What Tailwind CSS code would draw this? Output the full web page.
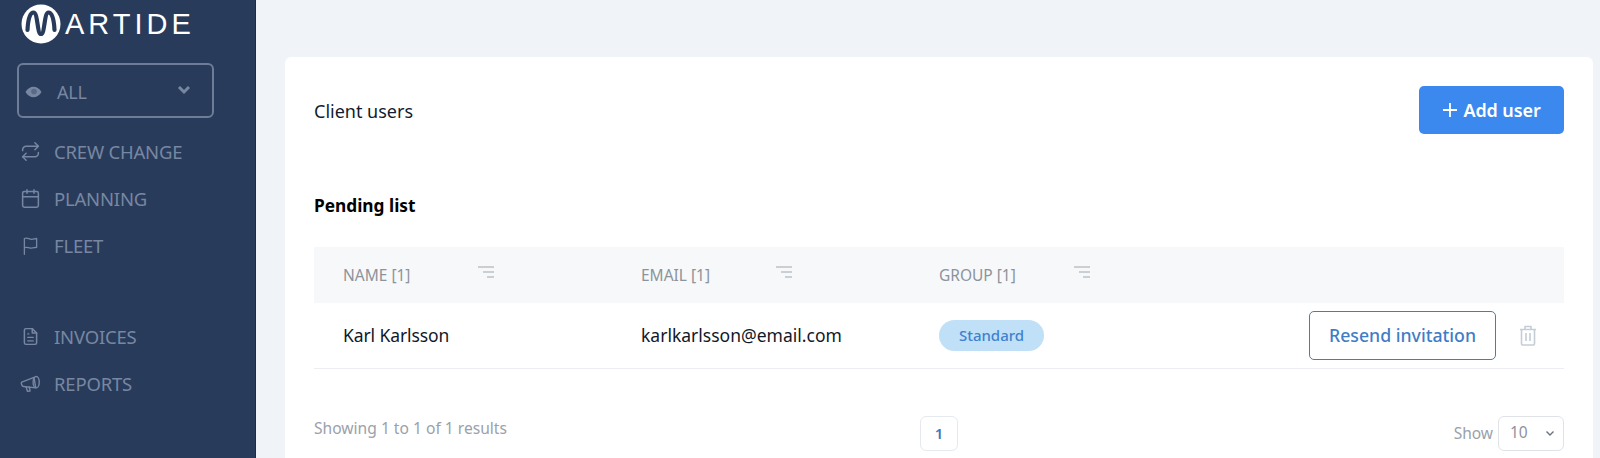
<!DOCTYPE html>
<html><head><meta charset="utf-8"><script src="https://cdn.jsdelivr.net/npm/@tailwindcss/browser@4"></script></head>
<body class="overflow-hidden">
<div class="flex h-[458px] w-[1600px] overflow-hidden bg-[#f0f3f8] font-['Noto_Sans','Open_Sans',sans-serif]">
  <aside class="w-[256px] shrink-0 bg-[#283b5b] text-[#7887a1] border-r border-[#1d2d49] flex flex-col">
    <div class="h-[63px] pl-[21px] pt-[4px] flex items-start">
      <svg width="40" height="40" viewBox="0 0 40 40" class="shrink-0"><circle cx="20" cy="20" r="19.500" fill="#fff"/><path d="M6.500 26 C7 15 9 8.500 12.500 8.500 C17 8.500 16 30 20 30 C24 30 23 8.500 27.500 8.500 C31 8.500 33 15 33.500 26" fill="none" stroke="#283b5b" stroke-width="4.200" stroke-linecap="round"/></svg>
      <span class="text-white text-[29px] leading-[32px] mt-[4px] ml-[4px] tracking-[4px] font-['Liberation_Sans',sans-serif]">ARTIDE</span>
    </div>
    <div class="mx-[17px] h-[55px] w-[197px] border-2 border-[#6d7d98] rounded-[6px] flex items-center pl-[6px] pr-[21px] shrink-0">
      <svg class="mt-[2px]" width="17" height="12" viewBox="0 0 18 12"><path d="M.500 6C3 2 6 .500 9 .500S15 2 17.500 6C15 10 12 11.500 9 11.500S3 10 .500 6Z" fill="currentColor"/><circle cx="9.500" cy="5.500" r="3" fill="#5a6a86"/></svg>
      <span class="ml-[15px] text-[18px] tracking-[-0.2px] mt-[4px]">ALL</span>
      <svg class="ml-auto mb-[1px]" width="14" height="10" viewBox="0 0 14 10" fill="none" stroke="currentColor" stroke-width="3"><path d="M2 2l5 5 5-5"/></svg>
    </div>
    <nav class="mt-[10px] pl-[20px] text-[18.500px] tracking-[-0.2px]">
      <div class="h-[47px] flex items-center gap-[13px]">
        <svg width="21" height="21" viewBox="0 0 24 24" fill="none" stroke="currentColor" stroke-width="1.700" stroke-linecap="round" stroke-linejoin="round"><path d="M17 2l4 4-4 4"/><path d="M3 11v-1a4 4 0 014-4h14"/><path d="M7 22l-4-4 4-4"/><path d="M21 13v1a4 4 0 01-4 4H3"/></svg>
        <span>CREW CHANGE</span></div>
      <div class="h-[47px] flex items-center gap-[13px]">
        <svg width="21" height="21" viewBox="0 0 24 24" fill="none" stroke="currentColor" stroke-width="1.700" stroke-linecap="round" stroke-linejoin="round"><rect x="3" y="4" width="18" height="18" rx="2"/><path d="M16 2v4M8 2v4M3 10h18"/></svg>
        <span>PLANNING</span></div>
      <div class="h-[47px] flex items-center gap-[13px]">
        <svg width="21" height="21" viewBox="0 0 24 24" fill="none" stroke="currentColor" stroke-width="1.500" stroke-linecap="round" stroke-linejoin="round"><path d="M5 22V4c4-1.500 5 1 8 1s3-.5 6-1v10c-3 .5-4 1-6 1s-4-1.500-8-.5"/></svg>
        <span>FLEET</span></div>
      <div class="h-[47px] mt-[44px] flex items-center gap-[13px]">
        <svg width="21" height="21" viewBox="0 0 24 24" fill="none" stroke="currentColor" stroke-width="1.700" stroke-linecap="round" stroke-linejoin="round"><path d="M14 3H7a2 2 0 00-2 2v14a2 2 0 002 2h10a2 2 0 002-2V8z"/><path d="M14 3v5h5M9 13h6M9 17h6M9 9h1"/></svg>
        <span>INVOICES</span></div>
      <div class="h-[47px] flex items-center gap-[13px]">
        <svg width="21" height="21" viewBox="0 0 24 24" fill="none" stroke="currentColor" stroke-width="1.600" stroke-linecap="round" stroke-linejoin="round"><path d="M2 10.500L16 5l2 12-14-1.500c-1 0-1.500-.5-1.800-1.500l-.7-2c0-.7 0-1.200.5-1.500z"/><ellipse cx="18.500" cy="10.500" rx="3.500" ry="6.500"/><path d="M7 16l1.500 5 3-.5-1-4.500"/></svg>
        <span>REPORTS</span></div>
    </nav>
  </aside>
  <main class="flex-1 pl-[29px] pt-[57px] pr-[7px]">
    <section class="bg-white rounded-[6px] h-[420px] px-[29px] pt-[29px]">
      <div class="flex items-center justify-between h-[48px]">
        <h1 class="text-[18px] mt-[3px] text-[#111c30]">Client users</h1>
        <button class="w-[145px] h-[48px] rounded-[5px] bg-[#3b88ee] text-white text-[18px] font-semibold tracking-[-0.1px] flex items-center justify-center gap-[5px]">
          <svg width="16" height="16" viewBox="0 0 16 16" fill="none" stroke="currentColor" stroke-width="1.800"><path d="M8 1v14M1 8h14"/></svg>Add user</button>
      </div>
      <h2 class="mt-[59px] mb-[28px] text-[17.300px] leading-[26px] font-bold text-black">Pending list</h2>
      <div class="h-[56px] bg-[#f6f8fa] flex items-center text-[15.500px] text-[#8d939c] pl-[29px]">
        <div class="w-[298px] flex items-center"><span class="w-[135px] mt-[2px]">NAME [1]</span><svg class="mb-[6px]" width="16" height="12" viewBox="0 0 16 12" fill="none" stroke="#bcc1c7" stroke-width="1.300"><path d="M0 1h16M5 6h11M9 11h7"/></svg></div>
        <div class="w-[298px] flex items-center"><span class="w-[135px] mt-[2px]">EMAIL [1]</span><svg class="mb-[6px]" width="16" height="12" viewBox="0 0 16 12" fill="none" stroke="#bcc1c7" stroke-width="1.300"><path d="M0 1h16M5 6h11M9 11h7"/></svg></div>
        <div class="flex items-center"><span class="w-[135px] mt-[2px]">GROUP [1]</span><svg class="mb-[6px]" width="16" height="12" viewBox="0 0 16 12" fill="none" stroke="#bcc1c7" stroke-width="1.300"><path d="M0 1h16M5 6h11M9 11h7"/></svg></div>
      </div>
      <div class="h-[66px] border-b border-[#eceef1] flex items-center pl-[29px] text-[17.500px] text-[#111827]">
        <div class="w-[298px] tracking-[-0.1px]">Karl Karlsson</div>
        <div class="w-[298px]">karlkarlsson@email.com</div>
        <div><span class="flex items-center justify-center w-[105px] h-[31px] rounded-full bg-[#bfe0f7] text-[#3f80cf] text-[15px] font-medium">Standard</span></div>
        <button class="ml-auto w-[187px] h-[49px] border border-[#4a7dac] rounded-[5px] text-[#3f7cc6] text-[17.700px] font-medium">Resend invitation</button>
        <svg class="ml-[23px] mr-[27px]" width="18" height="21" viewBox="0 0 18 21" fill="none" stroke="#c5cdd6" stroke-width="1.600" stroke-linejoin="round"><path d="M1 4.500h16M6 4V1.500h6V4M2.500 4.500V19a1 1 0 001 1h11a1 1 0 001-1V4.500M7 8v8M11 8v8"/></svg>
      </div>
      <div class="mt-[47px] relative flex items-center justify-between h-[34px]">
        <span class="text-[15.600px] mb-[8px] text-[#9aa1ab]">Showing 1 to 1 of 1 results</span>
        <span class="absolute left-[606px] top-0 w-[38px] h-[35px] border border-[#e6e9ee] rounded-[6px] flex items-center justify-center text-[15px] font-semibold text-[#4277bd]">1</span>
        <div class="flex items-center gap-[5px]">
          <span class="text-[15.500px] mt-[2px] text-[#9aa1ab]">Show</span>
          <div class="w-[66px] h-[35px] border border-[#dfe3e8] rounded-[6px] flex items-center justify-between pl-[11px] pr-[6px] text-[15.500px] text-[#8d939c]">10
            <svg width="14" height="14" viewBox="0 0 20 20" fill="none" stroke="#6b7280" stroke-width="2"><path d="M5 8l5 5 5-5"/></svg></div>
        </div>
      </div>
    </section>
  </main>
</div>
</body></html>
